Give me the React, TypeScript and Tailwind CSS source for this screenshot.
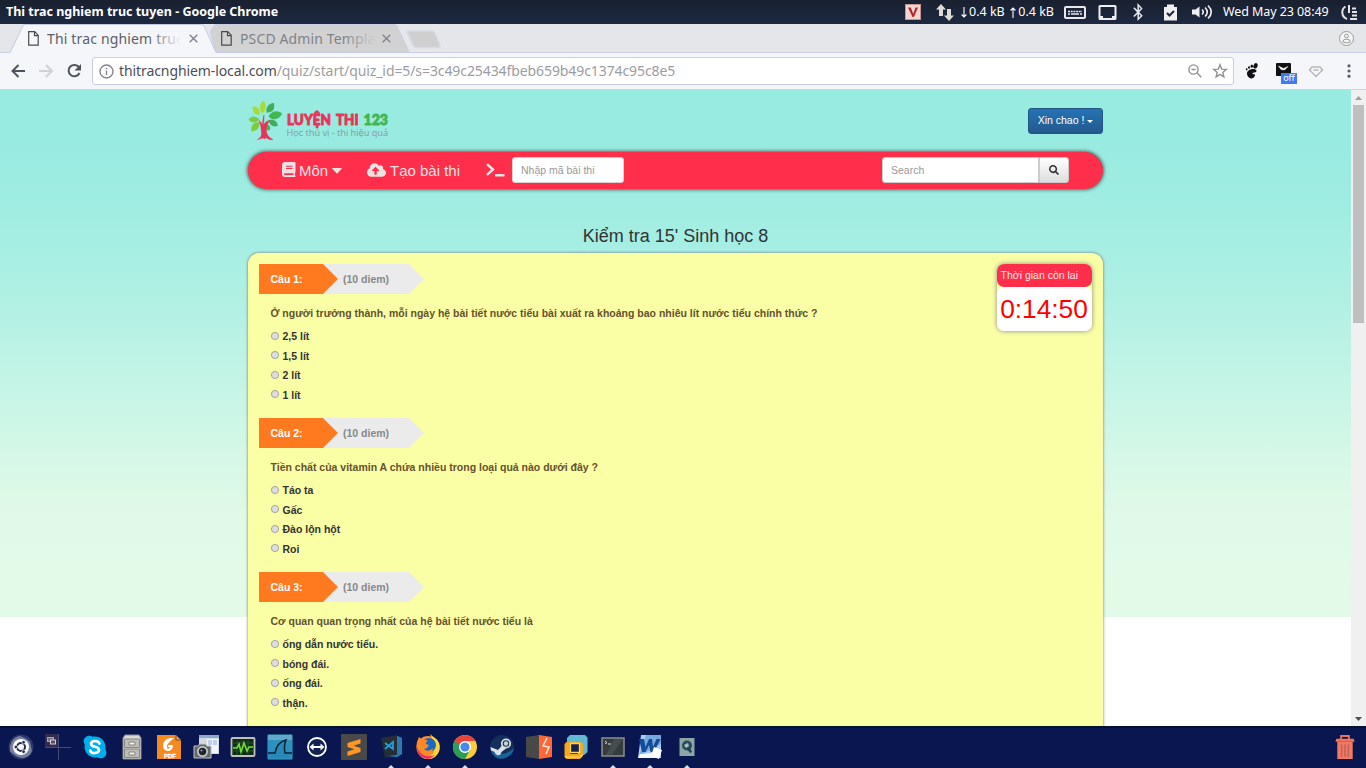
import React, { ReactNode } from "react";
import { FaCloudUploadAlt, FaSearch, FaSkype, FaBluetoothB } from "react-icons/fa";

const questions = [
  {
    text: "Ở người trưởng thành, mỗi ngày hệ bài tiết nước tiểu bài xuất ra khoảng bao nhiêu lít nước tiểu chính thức ?",
    options: ["2,5 lít", "1,5 lít", "2 lít", "1 lít"],
  },
  {
    text: "Tiền chất của vitamin A chứa nhiều trong loại quả nào dưới đây ?",
    options: ["Táo ta", "Gấc", "Đào lộn hột", "Roi"],
  },
  {
    text: "Cơ quan quan trọng nhất của hệ bài tiết nước tiểu là",
    options: ["ống dẫn nước tiểu.", "bóng đái.", "ống đái.", "thận."],
  },
];

function SystemBar() {
  return (
    <header className="flex h-6 shrink-0 items-center bg-linear-to-b from-[#19202f] to-[#1d2942] pl-1.5 font-['Noto_Sans',sans-serif] text-white">
      <span className="flex-1 whitespace-nowrap text-[12.5px] font-bold tracking-[-0.01px]">Thi trac nghiem truc tuyen - Google Chrome</span>
      <div className="flex h-6 w-[461px] items-center text-[12.5px]">
        <svg width="16" height="16" viewBox="0 0 16 16">
          <rect width="16" height="16" fill="#f3d6d2" />
          <rect x="0.5" y="0.5" width="15" height="15" fill="none" stroke="#c9938e" />
          <path d="M3 3.5L7.5 13h1.4L13 3.5h-2.5L8.3 9.7 5.7 3.5z" fill="#b5242a" />
        </svg>
        <svg className="ml-[15px]" width="18" height="18" viewBox="0 0 18 18" fill="#dfdbd2">
          <path d="M5 1L0 6.500h3V13h4V6.500h3zM13 18l5-5.500h-3V6h-4v6.500H8z" />
        </svg>
        <span className="ml-[7px] flex w-[96px] justify-between whitespace-nowrap pr-[3px] text-[12.5px]">
          <span className="flex items-center gap-[2px]">
            <svg width="6" height="11" viewBox="0 0 6 11" fill="none" stroke="#fff" strokeWidth="1.100"><path d="M3 0v10M.600 7.500L3 10l2.400-2.500" /></svg>
            0.4 kB
          </span>
          <span className="flex items-center gap-[2px]">
            <svg width="6" height="11" viewBox="0 0 6 11" fill="none" stroke="#fff" strokeWidth="1.100"><path d="M3 11V1M.600 3.500L3 1l2.400 2.500" /></svg>
            0.4 kB
          </span>
        </span>
        <svg className="ml-[7px]" width="22" height="13" viewBox="0 0 22 13" fill="none" stroke="#e8e8e8">
          <rect x="1" y="1" width="20" height="11" rx="1" strokeWidth="2" />
          <path d="M4 5.500h14" strokeWidth="1.400" strokeDasharray="2 .700" />
          <path d="M4 8h2M7 8h8M16 8h2" strokeWidth="1.400" />
        </svg>
        <svg className="ml-[12px]" width="19" height="17" viewBox="0 0 19 17">
          <path fillRule="evenodd" d="M2 1h15a1.500 1.500 0 011.500 1.500v12a1.500 1.500 0 01-1.500 1.500H2A1.500 1.500 0 01.500 14.500v-12A1.500 1.500 0 012 1zm.500 2v9h2.500v2h9v-2h2.500V3z" fill="#efefef" />
        </svg>
        <FaBluetoothB className="ml-[12px] h-[18px] w-[18px] text-[#e8e8e8]" />
        <svg className="ml-[17px]" width="13" height="17" viewBox="0 0 13 17">
          <path d="M0 3h3V.500h7V3h3v13.500H0z" fill="#efefef" />
          <path d="M3 9l2.500 2.500L10 7" fill="none" stroke="#1c2539" strokeWidth="2" />
        </svg>
        <svg className="ml-[15px]" width="21" height="16" viewBox="0 0 21 16" fill="none" stroke="#efefef" strokeWidth="1.600">
          <path d="M0 5.500h3.500l4-3v11l-4-3H0z" fill="#efefef" stroke="none" />
          <path d="M10 5.500q2.500 2.500 0 5M13 3.500q4.500 4.500 0 9M16 1.500q6.500 6.500 0 13" />
        </svg>
        <span className="ml-[10px] w-[107px] whitespace-nowrap tracking-[-0.08px]">Wed May 23 08:49</span>
        <svg className="ml-[10px]" width="19" height="17" viewBox="0 0 19 17" fill="none" stroke="#e4e4e4" strokeWidth="2">
          <path d="M5.500 2.500A7 7 0 007 15M9 1v8M12 4.500h4M12 8h5M12 11.500h5M10 15h7" />
        </svg>
      </div>
    </header>
  );
}

function FileIcon() {
  return (
    <svg className="shrink-0" width="11" height="15" viewBox="0 0 11 15" fill="none" stroke="#4a4a4a" strokeWidth="1.200">
      <path d="M.700.700h6l3.500 3.500v10H.700zM6.500.700v4h4" />
    </svg>
  );
}

function TabClose() {
  return (
    <svg className="shrink-0" width="9" height="9" viewBox="0 0 9 9" stroke="#85888f" strokeWidth="1.500">
      <path d="M.700.700l7.600 7.600M8.300.700L.700 8.300" />
    </svg>
  );
}

function TabStrip() {
  return (
    <div className="flex h-[29px] shrink-0 items-stretch border-b border-[#c9cee6] bg-[#e5e6ea] pl-[10px] font-['Noto_Sans',sans-serif] text-[14px]">
      <div className="relative z-10 -mb-px flex h-[29px] w-[206px] items-center pl-[18px]">
        <svg className="absolute inset-0" width="206" height="29" viewBox="0 0 206 29">
          <path d="M0 28.500L13 2Q13.500.500 15 .500H191Q193 .500 194 2L206 28.500V29H0z" fill="#f5f6f9" />
          <path d="M0 28.500L13 2Q13.500.500 15 .500H191Q193 .500 194 2L206 28.500" fill="none" stroke="#c4cae4" />
        </svg>
        <div className="relative flex items-center">
          <FileIcon />
          <div className="relative ml-[8px] w-[134px] overflow-hidden whitespace-nowrap tracking-[0.16px] text-[#5a5f6b]">
            Thi trac nghiem truc tuyen
            <span className="absolute inset-y-0 right-0 w-8 bg-linear-to-r from-transparent to-[#f5f6f9]" />
          </div>
          <span className="ml-[8px]"><TabClose /></span>
        </div>
      </div>
      <div className="relative -ml-[6px] flex h-[28px] w-[200px] items-center pl-[11px]">
        <svg className="absolute inset-0" width="200" height="28" viewBox="0 0 200 28">
          <path d="M0 8L5 .500H184Q186 .500 187 2L199 28H6z" fill="#d2d2d2" stroke="#c9cee6" />
        </svg>
        <div className="relative flex items-center">
          <FileIcon />
          <div className="relative ml-[8px] w-[135px] overflow-hidden whitespace-nowrap tracking-[0.13px] text-[#7f828a]">
            PSCD Admin Template
            <span className="absolute inset-y-0 right-0 w-8 bg-linear-to-r from-transparent to-[#d2d2d2]" />
          </div>
          <span className="ml-[7px]"><TabClose /></span>
        </div>
      </div>
      <svg className="-ml-[4px] mt-[6px]" width="36" height="19" viewBox="0 0 36 19">
        <path d="M1 2Q1 1 3 1H26Q28 1 29 3L34 15Q35 17.500 32 17.500H10Q8 17.500 7 15z" fill="#cfcfd0" stroke="#d6d9e8" strokeWidth="1.500" />
      </svg>
      <svg className="mr-[12px] ml-auto mt-[7px]" width="15" height="15" viewBox="0 0 15 15" fill="#f5f5f5" stroke="#9b9b9b">
        <circle cx="7.500" cy="7.500" r="7" />
        <circle cx="7.500" cy="5" r="1.900" />
        <path d="M3.700 11q0-2.800 3.800-2.800t3.800 2.800q-3.800 1.800-7.600 0z" />
      </svg>
    </div>
  );
}

function Toolbar() {
  return (
    <div className="flex h-[37px] shrink-0 items-center border-b border-[#cdd2e6] bg-[#f5f6f9] pl-[11px] font-['Noto_Sans',sans-serif]">
      <svg width="72" height="16" viewBox="0 0 72 16" fill="none" strokeWidth="2">
        <path d="M14 8H1.500M7.500 2L1.500 8l6 6" stroke="#4f535e" />
        <path d="M28 8h12.500M35 2l6 6-6 6" stroke="#d0d2d7" />
        <path d="M68 4.300A5.700 5.700 0 1068.500 10" stroke="#4f535e" />
        <path d="M70 1v6.500h-6.500z" fill="#4f535e" />
      </svg>
      <div className="ml-[9px] flex h-[28px] w-[1142px] items-center rounded-[3px] border border-[#c9cde4] bg-white pl-[6px]">
        <svg width="15" height="15" viewBox="0 0 15 15" fill="none" stroke="#85878e" strokeWidth="1.400">
          <circle cx="7.500" cy="7.500" r="6.500" />
          <path d="M7.500 6.500V11M7.500 3.700v1.600" />
        </svg>
        <span className="-mt-[1px] ml-[5px] flex-1 whitespace-nowrap text-[14px] tracking-[-0.09px] text-[#9b9da3]">
          <span className="text-[#4b4e57]">thitracnghiem-local.com</span>/quiz/start/quiz_id=5/s=3c49c25434fbeb659b49c1374c95c8e5
        </span>
        <svg className="mr-[-1px]" width="14" height="14" viewBox="0 0 14 14" fill="none" stroke="#8f9197" strokeWidth="1.400">
          <circle cx="5.500" cy="5.500" r="4.600" />
          <path d="M9 9l4.300 4.300M3.500 5.500h4" />
        </svg>
        <svg className="mr-[5px] ml-[11px]" width="16" height="16" viewBox="0 0 16 16" fill="none" stroke="#8f9197" strokeWidth="1.400">
          <path d="M8 1.800l1.700 4.300 4.600.300-3.500 3 1.100 4.500L8 11.400l-3.900 2.500 1.100-4.500-3.500-3 4.600-.300z" />
        </svg>
      </div>
      <svg className="ml-[11px]" width="13" height="16" viewBox="0 0 13 16" fill="#111">
        <ellipse cx="10.500" cy="2.800" rx="2" ry="2.800" transform="rotate(25 10.500 2.800)" />
        <ellipse cx="6.800" cy="3.200" rx="1.200" ry="1.600" />
        <ellipse cx="4" cy="4.500" rx="1" ry="1.300" />
        <ellipse cx="1.700" cy="6.300" rx=".900" ry="1.100" />
        <path d="M2 10C2.500 6 10.500 4.500 11.500 7.500c.500 2.500-4 1.800-4 3.200s2.300-.400 2.500 1C10.300 14.500 6.500 16.500 4.300 14.800 3 13.800 1.700 12 2 10z" />
      </svg>
      <div className="relative ml-[18px] h-[18px] w-[24px]">
        <svg width="16" height="16" viewBox="0 0 16 16">
          <rect y="1" width="15" height="13" rx="1" fill="#111" />
          <path d="M2.500 4l5 2.500L12 4.500 8.500 8 5 7.500z" fill="#fff" stroke="#fff" strokeWidth=".500" />
        </svg>
        <span className="absolute top-[11px] left-[5px] h-[11px] w-[16px] bg-[#4479f4] text-center text-[9px] leading-[10px] text-white">off</span>
      </div>
      <svg className="ml-[8px]" width="16" height="13" viewBox="0 0 16 13" fill="none" stroke="#b8b8b8" strokeWidth="1.500">
        <path d="M4 2h8l2.500 3L8 11.500 1.500 5zM5.500 5h5" />
      </svg>
      <svg className="ml-[23px]" width="4" height="14" viewBox="0 0 4 14" fill="#5b5e68">
        <circle cx="2" cy="1.800" r="1.600" /><circle cx="2" cy="7" r="1.600" /><circle cx="2" cy="12.200" r="1.600" />
      </svg>
    </div>
  );
}

function Logo() {
  return (
    <svg width="142" height="42" viewBox="0 0 142 42">
      <path d="M0 0C4-4 4-9 0-13-4-9-4-4 0 0z" transform="translate(14.500 13.500) rotate(3)" fill="#a5dc3a" />
      <path d="M0 0C5-3 5-8 0-12-4-8-4-4 0 0z" transform="translate(18.500 12.500) rotate(38)" fill="#3fae57" />
      <path d="M0 0C6-4 5-10 0-14-5-10-5-4 0 0z" transform="translate(20.500 16.500) rotate(78)" fill="#43b651" />
      <path d="M0 0C4-4 4-8 0-11-4-8-4-4 0 0z" transform="translate(20.500 20) rotate(122)" fill="#3fae57" />
      <path d="M0 0C3-3 3-5 0-7-3-5-3-3 0 0z" transform="translate(18.500 24) rotate(158)" fill="#43b651" />
      <path d="M0 0C4-4 4-7 0-11-4-7-4-4 0 0z" transform="translate(11.500 15) rotate(-38)" fill="#a5dc3a" />
      <path d="M0 0C4-4 4-8 0-11-4-8-4-4 0 0z" transform="translate(11.500 19.500) rotate(-90)" fill="#7ccc40" />
      <path d="M0 0C5-3 5-8 0-12-4-8-4-4 0 0z" transform="translate(11.500 22.500) rotate(-138)" fill="#7ccc40" />
      <path d="M9.500 39.500q4.500-2 4-7Q13.500 26 11 20.500q3 2.500 3.500 4.500 0-5 1.500-10 0 6-.500 10 2-4 6-4.500Q17.500 26 18.500 31.500q.500 5.500 6.500 8-2 .500-5-.500-1-2-2-1-1.500 1.500-3 0z" fill="#e8345a" stroke="#e8345a" strokeWidth=".500" />
      <g fontFamily="'Lato', sans-serif" fontWeight="900" fontSize="14.500" strokeWidth=".900" strokeLinejoin="round">
        <text x="39" y="24.800" fill="#e8345a" stroke="#e8345a" textLength="44" lengthAdjust="spacingAndGlyphs">LUYỆN</text>
        <text x="88" y="24.800" fill="#e8345a" stroke="#e8345a" textLength="22.500" lengthAdjust="spacingAndGlyphs">THI</text>
        <text x="115.500" y="24.800" fill="#43b651" stroke="#43b651" textLength="24.500" lengthAdjust="spacingAndGlyphs">123</text>
      </g>
      <text x="38.500" y="36" fontFamily="'Open Sans', sans-serif" fontSize="9.500" fill="#82999a" textLength="101.500" lengthAdjust="spacingAndGlyphs">Học thú vị - thi hiệu quả</text>
    </svg>
  );
}

function NavBar() {
  return (
    <nav className="mt-[16px] flex h-[37px] items-center rounded-full bg-[#ff2e4a] pl-[34px] text-[15px] text-[#e9e4e4] shadow-[0_0_4px_#222]">
      <svg className="-mt-[2px]" width="14" height="15" viewBox="0 0 14 15">
        <path fillRule="evenodd" d="M3 0h9.500q1 0 1 1v9q0 .700-.500 1-.300 1.500 0 2.600.500.200.500.700t-.700.700H3Q0 15 0 12V3Q0 0 3 0zM4 3.700v1h6.500v-1zm0 2.300v1h6.500V6zM3 11.300q-1 0-1 .900t1 .900h8.500v-1.800z" fill="#e9e4e4" />
      </svg>
      <span className="mt-px ml-[3px] w-[30px]">Môn</span>
      <svg className="ml-[3px]" width="10" height="6" viewBox="0 0 10 6" fill="#e9e4e4"><path d="M.500 0h9q.700.400 0 1L5.500 5.300q-.500.500-1 0L.500 1Q0 .400.500 0z" /></svg>
      <FaCloudUploadAlt className="-mt-[2px] ml-[25px] h-[16px] w-[19px]" />
      <span className="mt-px ml-[4px] w-[71px] whitespace-nowrap">Tạo bài thi</span>
      <svg className="-mt-[1px] ml-[25px]" width="19" height="14" viewBox="0 0 19 14" fill="none" stroke="#e9e4e4" strokeWidth="2.400">
        <path d="M1 1.200l6 5.300-6 5.300M9 12.300h9.500" />
      </svg>
      <input className="-mt-[1px] ml-[7px] h-[26px] w-[112px] rounded-[3px] border border-[#d8d0d0] bg-white px-[8px] text-[10.5px] placeholder:text-[#999]" placeholder="Nhập mã bài thi" />
      <div className="-mt-px mr-[34px] ml-auto flex">
        <input className="h-[26px] w-[157px] rounded-l-[3px] border border-[#ccc] bg-white px-[8px] text-[10.5px] placeholder:text-[#999]" placeholder="Search" />
        <button className="flex h-[26px] w-[30px] items-center justify-center rounded-r-[3px] border border-[#ccc] bg-linear-to-b from-white to-[#dedede]">
          <FaSearch className="mb-px size-[10px] text-[#333]" />
        </button>
      </div>
    </nav>
  );
}

function Question({ index, text, options }: { index: number; text: string; options: string[] }) {
  return (
    <section className="h-[154px] text-[10.5px] font-bold">
      <div className="flex h-[30px] items-center leading-[30px]">
        <div className="z-10 w-[79px] bg-[#ff7a1f] pl-[11.5px] text-white [clip-path:polygon(0_0,64px_0,100%_50%,64px_100%,0_100%)]">Câu {index}:</div>
        <div className="-ml-[14px] w-[100px] bg-[#ebebeb] pl-[19px] text-[#888] [clip-path:polygon(0_0,85px_0,100%_50%,85px_100%,0_100%)]">(10 diem)</div>
      </div>
      <p className="mt-[12px] pl-[11.5px] leading-[15px] text-[#66512c]">{text}</p>
      <div className="mt-[6.2px] pl-[12px]">
        {options.map((o) => (
          <label key={o} className="flex h-[19.67px] items-center text-[#333]">
            <svg className="mr-[3.5px] mb-[3px] shrink-0" width="8" height="8" viewBox="0 0 8 8">
              <circle cx="4" cy="4" r="3.600" fill="#dedede" stroke="#9c9c9c" strokeWidth=".900" />
            </svg>
            {o}
          </label>
        ))}
      </div>
    </section>
  );
}

function Page() {
  return (
    <div className="flex min-h-0 flex-1 bg-white">
      <main className="h-full flex-1 overflow-hidden bg-[linear-gradient(#98ebe1_0px,#99ebe1_60px,#a5eee3_150px,#b5f1e4_230px,#c7f5e6_305px,#d8f8e7_375px,#e1f9e8_430px,#e3fae8_527px,#fff_527px)] font-['Liberation_Sans',Arial,sans-serif]">
        <div className="mx-auto w-[855px]">
          <div className="flex h-[46px] justify-between pt-[8px]">
            <div className="pt-[2px]"><Logo /></div>
            <button className="mt-[10px] flex h-[26px] w-[75px] items-center justify-center gap-[3px] rounded-[3px] border border-[#245580] bg-linear-to-b from-[#2473b5] to-[#24598c] text-[10.5px] text-white">
              Xin chao !
              <svg width="6" height="3" viewBox="0 0 6 3" fill="#fff"><path d="M0 0h6L3 3z" /></svg>
            </button>
          </div>
          <NavBar />
          <h1 className="mt-[34px] h-[30px] text-center text-[18px] leading-[27px] text-[#333]">Kiểm tra 15' Sinh học 8</h1>
          <div className="relative h-[700px] rounded-[11px] bg-[#faffa6] px-[11px] pt-[11px] shadow-[0_0_3px_#667]">
            {questions.map((q, i) => (
              <Question key={i} index={i + 1} text={q.text} options={q.options} />
            ))}
            <aside className="absolute top-[11px] right-[11px] h-[67px] w-[95px] rounded-[7px] shadow-[0_0_5px_#888]">
              <div className="h-[23px] rounded-[7px] bg-[#ff2e4a] pl-[3.5px] text-[10.5px] leading-[23px] text-[#f3e9ea]">Thời gian còn lai</div>
              <div className="h-[44px] rounded-[7px] bg-white pr-px text-center text-[26.3px] leading-[44px] text-[#f00]">0:14:50</div>
            </aside>
          </div>
        </div>
      </main>
      <div className="flex w-[15px] shrink-0 flex-col items-center bg-[#f0f0f0]">
        <svg className="mt-[6px]" width="7" height="4" viewBox="0 0 7 4" fill="#9d9d9d"><path d="M3.500 0L7 4H0z" /></svg>
        <div className="mt-[5px] h-[218px] w-[11px] bg-[#bfbfbf]" />
        <svg className="mt-auto mb-[5px]" width="7" height="4" viewBox="0 0 7 4" fill="#505050"><path d="M0 0h7L3.500 4z" /></svg>
      </div>
    </div>
  );
}

function Glyph({ children }: { children: ReactNode }) {
  return <svg width="26" height="26" viewBox="0 0 26 26">{children}</svg>;
}

const apps: { icon: ReactNode; running?: boolean }[] = [
  { icon: <Glyph><circle cx="13" cy="13" r="12.500" fill="#2a3768" /><path d="M2 17Q1 5 11 2q6 1 11 6l2 9q-3 7-10 7-7-1-12-7z" fill="#77809d" /><circle cx="13" cy="13" r="8" fill="#fff" /><circle cx="13" cy="13" r="4" fill="none" stroke="#252b4a" strokeWidth="2" /><g fill="#252b4a" stroke="#fff" strokeWidth=".700"><circle cx="7.800" cy="13" r="1.800" /><circle cx="15.600" cy="8.200" r="1.800" /><circle cx="15.600" cy="17.800" r="1.800" /></g></Glyph> },
  { icon: <Glyph><rect width="13" height="13" fill="#352b4c" /><path d="M13.500 0v26M0 13.500h26" stroke="#434c78" /><rect x="2.500" y="3.500" width="6" height="4" fill="#766f84" stroke="#aaa3b3" /><rect x="5.500" y="6" width="5" height="4" fill="#554b62" stroke="#d3cdd8" /></Glyph> },
  { icon: <Glyph><FaSkype x="0" y="0" size={26} color="#00aff0" /><circle cx="13" cy="13" r="9" fill="#00aff0" /><path d="M17.500 9.500Q16.500 7 13 7T9 9.800q0 2.200 4 3t4 3.200-4 3-4.700-2.500" fill="none" stroke="#fff" strokeWidth="2.700" strokeLinecap="round" /></Glyph> },
  { icon: <Glyph><path d="M6 1h14l2 3v21H4V4z" fill="#d9d8d4" stroke="#8e8d88" /><path d="M5.500 5h15v8.500h-15zM5.500 15h15v8.500h-15z" fill="#bdbcb7" stroke="#898984" /><path d="M10 8h6v3h-6zM10 18h6v3h-6z" fill="#f1f1ed" stroke="#85857f" /></Glyph> },
  { icon: <Glyph><path d="M1 1h19l5 5v19H1z" fill="#f58a20" /><path d="M20 1v5h5z" fill="#f5a55b" stroke="#7c4a25" /><path d="M18 4Q8 3 7 11q0 6 6 6 4-1 4-6h-4l-1.500 2H14q-1 2.500-2.500 1.500Q10 12 12.500 9q2-2 5.500-5z" fill="#fff" /><text x="14" y="24" textAnchor="middle" fontSize="6" fontWeight="900" fill="#fff" stroke="#fff" strokeWidth=".300" fontFamily="Liberation Sans, sans-serif">PDF</text></Glyph> },
  { icon: <Glyph><rect x="6" y="1" width="20" height="19" fill="#d4d9df" /><path d="M6 1h20v3H6z" fill="#8ca9d0" /><path d="M14 5h11v14H14z" fill="#f1f4fb" /><path d="M15 6h4v5h-4zM20 6h4v5h-4z" fill="#c0cfe9" /><path d="M1 12h4l1.500-2h6l1.500 2h4v12H1z" fill="#64686c" stroke="#bfc3c5" /><circle cx="9.500" cy="17.500" r="5.500" fill="#c3c7c8" /><circle cx="9.500" cy="17.500" r="3.700" fill="#202427" /><circle cx="8.500" cy="16.500" r="1" fill="#98a0a8" /></Glyph> },
  { icon: <Glyph><rect x="1.500" y="4" width="23" height="18" rx="1" fill="#102d17" stroke="#bec1b8" strokeWidth="1.800" /><path d="M3 9h20M3 13h20M3 17h20M7 6v15M12 6v15M18 6v15" stroke="#24512b" /><path d="M3 14h4l2-4 2 8 3-9 3 8 2-4h4" fill="none" stroke="#72dd36" strokeWidth="1.600" /></Glyph> },
  { icon: <Glyph><rect x=".500" y=".500" width="25" height="25" rx="1.500" fill="#2d91be" stroke="#235f80" /><path d="M1 1h24v5H1z" fill="#62a8cb" /><path d="M2 19h6Q10 8 19 6q-2.500 6-1 13h6v5H2z" fill="#2988b7" /><path d="M1 19h7Q10 8 19 6q-2.500 6-1 13h7" fill="none" stroke="#092233" strokeWidth="1.500" /></Glyph> },
  { icon: <Glyph><circle cx="13" cy="13" r="9" fill="#142252" stroke="#fff" strokeWidth="1.800" /><path d="M5.500 13L9.500 9.500v2.500h7V9.500l4 3.500-4 3.500V14h-7v2.500z" fill="#fff" /></Glyph> },
  { icon: <Glyph><rect width="26" height="26" rx="1" fill="#494949" /><path d="M19.500 5v4.500l-7 2.200 7 2.300v4L6.500 22v-4.500l7-2.200-7-2.300V9z" fill="#ff9727" /></Glyph> },
  { running: true, icon: <Glyph><path d="M3 4l16-3v21L7 24z" fill="#252d37" /><path d="M19 2l5 2v16l-5 3-9-1 9-1z" fill="#1d8acb" /><path d="M19 2v20l5-2V4z" fill="#2c79ae" /><path d="M7 9l8 6V8l-8 7" fill="none" stroke="#299ddb" strokeWidth="1.800" /></Glyph> },
  { running: true, icon: <Glyph><circle cx="13" cy="13.500" r="11.500" fill="#ff8b2d" /><path d="M15 0q2 2 5 4 6 4 4.500 12-3 9-11.500 9-4-.500-6-2 9 2 12-5 2-7-4-18z" fill="#ffd43c" /><circle cx="14" cy="11" r="7" fill="#176bc0" /><path d="M4 3l3.500 3 5 0-2 4 3.500 1-2 3-3 1q4 4 9-1-1 7-7 7-8-1-9.500-8 0-6 2.500-10z" fill="#ff8a25" /><path d="M2 12q2 8 9 10 5 1 9-1-4 4-8 4Q2 23 2 12z" fill="#ef2c63" /></Glyph> },
  { running: true, icon: <Glyph><circle cx="13" cy="13" r="12" fill="#ffcd3b" /><path d="M2.600 7A12 12 0 0013 25l5.200-9L13 13z" fill="#2c9d59" /><path d="M2.600 7l5.200 9h5V7z" fill="#2c9d59" /><path d="M2.600 7A12 12 0 0123.400 7H13a6 6 0 00-5.500 4z" fill="#e5453b" /><circle cx="13" cy="13" r="6" fill="#fff" /><circle cx="13" cy="13" r="4.600" fill="#4688ef" /></Glyph> },
  { icon: <Glyph><circle cx="13" cy="13" r="12" fill="#142f59" /><path d="M2 17q4 10 14 7 8-3 9-10-10 10-23 3z" fill="#17649b" /><circle cx="17" cy="9.500" r="4.200" fill="#183153" stroke="#d4dae1" strokeWidth="1.800" /><circle cx="17" cy="9.500" r="2.200" fill="#c9d0d8" /><path d="M1.500 13l7.500 3 4-4.500 4 3-4.500 3.500q-1 4-4.500 3-2-1-2.500-3L2 16.500z" fill="#dae0e5" /></Glyph> },
  { icon: <Glyph><path d="M0 3l13-2v24L0 23z" fill="#484848" /><path d="M13 1l13 2v20l-13 2z" fill="#ff6737" /><path d="M21 4l-4 8 6 1-3 7" fill="none" stroke="#ffe6dc" strokeWidth="1.500" /></Glyph> },
  { icon: <Glyph><path d="M7 1h15l2.500 2.500V18L21 21h-5V9H4V4z" fill="#64b9d2" /><path fillRule="evenodd" d="M3.500 8H18l2 2v12l-3 3H3.500L1.500 23V10zM7 12v8h8v-8z" fill="#f5a71f" /><path d="M7.500 9.500h9v9h-9z" fill="#142252" stroke="#ffd565" strokeWidth="1.300" /><path d="M2 23h15l3-2.500" fill="none" stroke="#ffce58" strokeWidth="1.300" /></Glyph> },
  { running: true, icon: <Glyph><rect x="2" y="4" width="22" height="18" fill="#353c3e" stroke="#8e8e8b" strokeWidth="1.500" /><path d="M14 5h9L12 21H6z" fill="#52595a" opacity=".600" /><path d="M5 7l2 1.500L5 10M8 10h3" fill="none" stroke="#ddd" /></Glyph> },
  { running: true, icon: <Glyph><path d="M4 1h20v23H1z" fill="#a9cbef" /><path d="M9 1h15v9L2 22z" fill="#5f9ada" opacity=".700" /><path d="M2 5h5l1.500 8L12 5h3l1 8 3.500-8h4l-6.500 13h-3.500L12 11l-3.500 7H5z" fill="#164b96" /><path d="M17 13l8 3-3 9-8-3z" fill="#fff" /><path d="M3 20l13-1 3 5H1z" fill="#f4f7fb" /></Glyph> },
  { running: true, icon: <Glyph><rect x="5.500" y="4" width="15" height="18" fill="#8ca5a7" /><circle cx="13" cy="11.500" r="5" fill="#2a4c5c" /><path d="M13 15l3-1 2 4-2 1z" fill="#164252" /><path d="M10 11l4-2 1 3-3 2z" fill="#a9c0bb" /></Glyph> },
];

function Taskbar() {
  return (
    <footer className="flex h-[42px] shrink-0 border-t-2 border-[#07102d] bg-[#0a1650] pl-[2px]">
      {apps.map((a, i) => (
        <div key={i} className="flex w-[37px] flex-col items-center pt-[6px]">
          {a.icon}
          {a.running && <svg className="mt-auto" width="6" height="3" viewBox="0 0 6 3" fill="#e0e0e8"><path d="M3 0l3 3H0z" /></svg>}
        </div>
      ))}
      <svg className="mr-[10px] ml-auto mt-[6px]" width="22" height="26" viewBox="0 0 22 27">
        <path d="M7 6V2h8v4" fill="none" stroke="#e9745c" strokeWidth="2" />
        <path d="M2 5h18l1 3H1z" fill="#f3745c" />
        <path d="M3 8h16v18H3z" fill="#f07964" />
        <path d="M7.500 11v13M11 11v13M14.500 11v13" stroke="#c05f56" strokeWidth="1.500" />
      </svg>
    </footer>
  );
}

export default function App() {
  return (
    <div className="flex h-[768px] w-[1366px] flex-col overflow-hidden">
      <SystemBar />
      <TabStrip />
      <Toolbar />
      <Page />
      <Taskbar />
    </div>
  );
}
